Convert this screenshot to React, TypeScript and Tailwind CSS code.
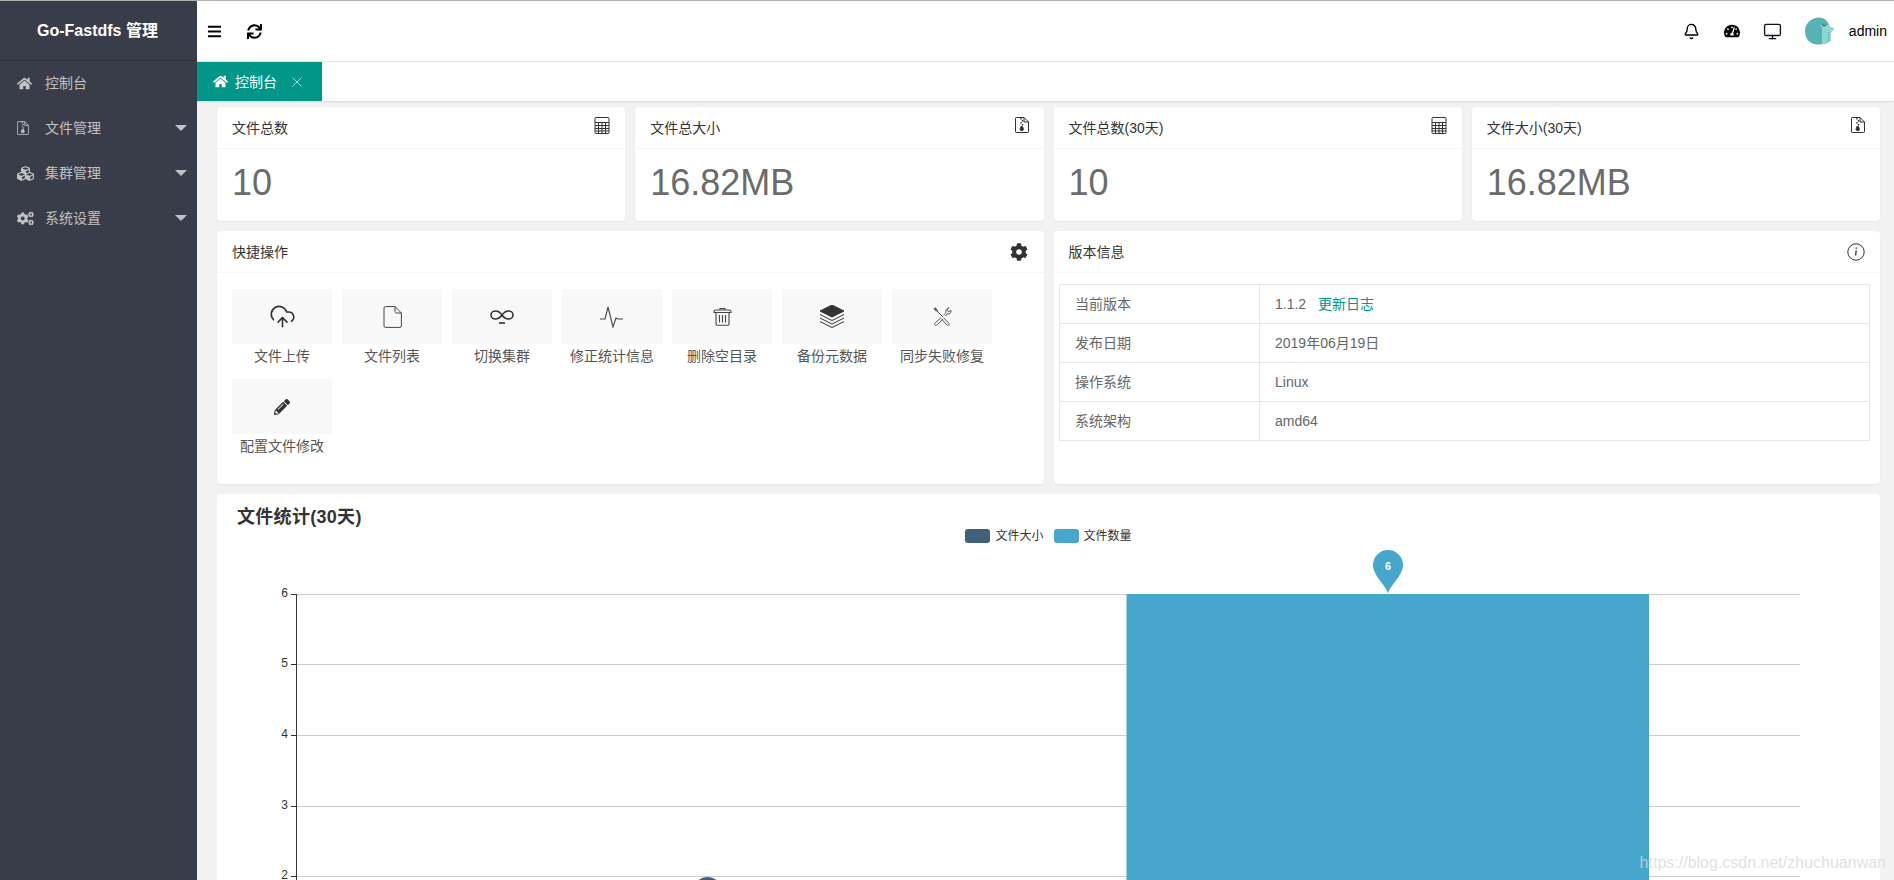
import React from "react";
import { Bell, CloudUpload, Monitor } from "lucide-react";
import {
  FaBars,
  FaCog,
  FaCogs,
  FaCubes,
  FaHome,
  FaPencilAlt,
  FaSync,
  FaTachometerAlt,
} from "react-icons/fa";

function CalcIcon() {
  return (
    <svg width="16" height="17" viewBox="0 0 16 17" fill="none" stroke="#333" strokeWidth="1">
      <rect x="1" y="0.5" width="14" height="16" rx="1" />
      <path d="M1 5.5H15M1 8.5H15M1 11.5H15M1 14H15M4.5 5.5V16.5M8 5.5V16.5M11.5 5.5V16.5" />
    </svg>
  );
}

function ZipIcon({ w = 14, h = 16 }: { w?: number; h?: number }) {
  return (
    <svg width={w} height={h} viewBox="0 0 14 16" fill="none" stroke="currentColor" strokeWidth="1">
      <path d="M0.5 1.2C0.5 0.8 0.8 0.5 1.2 0.5H9L13.5 5V14.8C13.5 15.2 13.2 15.5 12.8 15.5H1.2C0.8 15.5 0.5 15.2 0.5 14.8Z" />
      <path d="M9 0.5V5H13.5" />
      <path d="M6 1V2.5M7.5 3V4.5M6 5V6.5M7.5 7V8.5" strokeWidth="1.4" />
      <path d="M5 12.5L6 9.5H7.5L8.5 12.5C8.5 14 5 14 5 12.5Z" fill="currentColor" />
    </svg>
  );
}

function FileIcon() {
  return (
    <svg width="19" height="22" viewBox="0 0 19 22" fill="none" stroke="#444" strokeWidth="1">
      <path d="M1 2C1 1.2 1.5 0.6 2.3 0.6H12L18.4 7V20C18.4 20.8 17.8 21.4 17 21.4H2.3C1.5 21.4 1 20.8 1 20Z" />
      <path d="M12 0.6V5.5C12 6.4 12.6 7 13.5 7H18.4" />
    </svg>
  );
}

function InfinityIcon() {
  return (
    <svg width="24" height="14" viewBox="0 0 24 14" fill="none" stroke="#333" strokeWidth="1.6">
      <path d="M12 5C10 2 8 1 5.5 1C3 1 1 2.6 1 5C1 7.4 3 9 5.5 9C8 9 10 7.6 12 5C14 2.4 16 1 18.5 1C21 1 23 2.6 23 5C23 7.4 21 9 18.5 9C16 9 14 8 12 5Z" />
      <path d="M9 13H15" />
    </svg>
  );
}

function PulseIcon() {
  return (
    <svg width="24" height="22" viewBox="0 0 24 22" fill="none" stroke="#444" strokeWidth="1.1">
      <path d="M0 13H5L8 1L13 21L16 12L18 13H23" />
    </svg>
  );
}

function TrashIcon() {
  return (
    <svg width="19" height="19" viewBox="0 0 19 19" fill="none" stroke="#444" strokeWidth="1.1">
      <path d="M1 4.5C1 3 2 3 3 3H16C17 3 18 3 18 4.5V5.5H1Z" />
      <path d="M7 3V1.5H12V3" />
      <path d="M3 5.5V17C3 17.8 3.4 18.2 4 18.2H15C15.6 18.2 16 17.8 16 17V5.5" />
      <path d="M6.5 8V15.5M9.5 8V15.5M12.5 8V15.5" />
    </svg>
  );
}

function LayersIcon() {
  return (
    <svg width="26" height="23" viewBox="0 0 26 23" fill="none" stroke="#333" strokeWidth="1">
      <path d="M13 0L25 6L13 12L1 6Z" fill="#333" />
      <path d="M1 9.5L13 15.5L25 9.5M1 13L13 19L25 13M1 16.5L13 22.5L25 16.5" />
    </svg>
  );
}

function ToolsIcon() {
  return (
    <svg width="19" height="19" viewBox="0 0 19 19" fill="none" stroke="#555" strokeWidth="1">
      <path d="M1 1.8L2 0.8L4.5 3L3.4 4.2Z" fill="#555" />
      <path d="M3.5 3.5L10 10" />
      <path d="M10.5 10.8L15.8 16.2C16.6 17 16.2 18 15.4 18.2C14.8 18.4 14.3 18.2 13.8 17.8L8.6 12.2" />
      <path d="M8 10.8L2.2 15.8C1.2 16.8 1.4 17.8 2 18.2C2.8 18.7 3.6 18.4 4.3 17.7L10 12" />
      <path d="M10.8 7.8L13 5.4C12.4 3.4 13.4 1.4 15.8 0.8L14.2 3.2L15.6 4.8L18 3.4C18.4 5.8 16.4 7.6 14.2 6.9L12.2 9.2" />
    </svg>
  );
}

function InfoIcon() {
  return (
    <svg width="18" height="18" viewBox="0 0 18 18" fill="none" stroke="#333" strokeWidth="1">
      <circle cx="9" cy="9" r="8.2" />
      <path d="M9.2 7.5L8.6 12.5" strokeWidth="1.3" />
      <path d="M9.3 4.6V5.8" strokeWidth="1.4" />
    </svg>
  );
}

function Avatar() {
  return (
    <svg width="31" height="28" viewBox="0 0 31 28">
      <path d="M1 14C1 6 8 0.5 15 0.5C20 0.5 24 3.5 25.5 9.5L30 11.5L27 15.5V23C24 26.5 19 27.5 14 27.5C6 27.5 1 22 1 14Z" fill="#57b3b3" />
      <path d="M16 8C20 6.5 24 7 25.5 9.5L30 11.5L27 15.5V23C24 26 20.5 27 18 27V10Z" fill="#8cd6d4" />
      <path d="M18 7L20 9L22.5 7.5" fill="none" stroke="#2f6f70" strokeWidth="1.1" />
      <path d="M24.5 15V25" stroke="#4a8a8a" strokeWidth="1" strokeDasharray="1 1.5" />
    </svg>
  );
}

function Caret() {
  return <span className="ml-auto h-0 w-0 border-x-[6px] border-t-[6px] border-x-transparent border-t-[#c2c2c2]"></span>;
}

const menus = [
  { label: "控制台", icon: <FaHome size={15} />, more: false },
  { label: "文件管理", icon: <ZipIcon w={12} h={14} />, more: true },
  { label: "集群管理", icon: <FaCubes size={17} />, more: true },
  { label: "系统设置", icon: <FaCogs size={17} />, more: true },
];

const stats = [
  { title: "文件总数", value: "10", icon: <CalcIcon /> },
  { title: "文件总大小", value: "16.82MB", icon: <ZipIcon /> },
  { title: "文件总数(30天)", value: "10", icon: <CalcIcon /> },
  { title: "文件大小(30天)", value: "16.82MB", icon: <ZipIcon /> },
];

const quick = [
  { label: "文件上传", icon: <CloudUpload size={27} strokeWidth={1.4} color="#333" /> },
  { label: "文件列表", icon: <FileIcon /> },
  { label: "切换集群", icon: <InfinityIcon /> },
  { label: "修正统计信息", icon: <PulseIcon /> },
  { label: "删除空目录", icon: <TrashIcon /> },
  { label: "备份元数据", icon: <LayersIcon /> },
  { label: "同步失败修复", icon: <ToolsIcon /> },
  { label: "配置文件修改", icon: <FaPencilAlt size={16} color="#333" /> },
];

const ticks = [
  { label: "6", y: 51.5 },
  { label: "5", y: 121.5 },
  { label: "4", y: 192.5 },
  { label: "3", y: 263.5 },
  { label: "2", y: 333.5 },
];

const PIN = "C-1 -8 -15 -18 -15 -29A15 15 0 1 1 15 -29C15 -18 1 -8 0 0Z";

function Chart() {
  return (
    <svg width="1663" height="340" viewBox="0 0 1663 340" className="block">
      {ticks.map((t) => (
        <g key={t.label}>
          <path d={`M79 ${t.y}H1583`} stroke="#ccc" strokeWidth="1" />
          <path d={`M74 ${t.y}H79`} stroke="#333" strokeWidth="1" />
          <text x="71" y={t.y + 2} textAnchor="end" fontSize="12" fill="#333">
            {t.label}
          </text>
        </g>
      ))}
      <path d="M79.5 51V340" stroke="#333" strokeWidth="1" />
      <rect x="909.5" y="51" width="522.5" height="289" fill="#46a6cb" />
      <g transform="translate(1171 51)">
        <path d={`M0 0${PIN}`} fill="#46a6cb" />
        <text x="0" y="-24" textAnchor="middle" fontSize="11" fontWeight="700" fill="#fff">
          6
        </text>
      </g>
      <g transform="translate(490.5 378)">
        <path d={`M0 0${PIN}`} fill="#41607a" />
      </g>
    </svg>
  );
}

export default function App() {
  return (
    <div className="relative flex h-[880px] w-[1894px] flex-col overflow-hidden bg-[#f2f2f2] font-['Liberation_Sans','Noto_Sans_CJK_SC',sans-serif] text-sm text-[#666]">
      <div className="h-px bg-[#b0b0b0]"></div>
      <div className="flex min-h-0 flex-1">
        <aside className="w-[197px] shrink-0 bg-[#393d49]">
          <div className="flex h-[60px] items-center justify-center border-b border-[#2f323c] pr-[2px] text-base font-bold text-white">
            Go-Fastdfs 管理
          </div>
          {menus.map((m) => (
            <div key={m.label} className="flex h-[45px] items-center pb-px pl-[17px] pr-[10px] text-[#c2c2c2]">
              <span className="flex w-[28px] items-center">{m.icon}</span>
              <span>{m.label}</span>
              {m.more && <Caret />}
            </div>
          ))}
        </aside>

        <main className="min-w-0 flex-1">
          <header className="flex h-[61px] items-center border-b border-[#e6e6e6] bg-white text-black">
            <FaBars size={15} className="ml-[10px]" />
            <FaSync size={15} className="ml-[25px]" />
            <div className="ml-auto flex items-center">
              <Bell size={17} strokeWidth={1.9} />
              <FaTachometerAlt size={16} className="ml-[24px]" />
              <Monitor size={19} strokeWidth={1.7} color="#112" className="ml-[23px]" />
              <span className="ml-[22px]">
                <Avatar />
              </span>
              <span className="ml-[14px] mr-[7px]">admin</span>
            </div>
          </header>

          <div className="flex h-[39px] bg-white shadow-[0_1px_2px_rgba(0,0,0,0.1)]">
            <div className="flex w-[125px] items-center bg-[#009688] pl-4 text-white">
              <FaHome size={15} />
              <span className="ml-[7px]">控制台</span>
              <svg width="10" height="10" viewBox="0 0 10 10" className="ml-[15px]" stroke="#a6dcd6" strokeWidth="1">
                <path d="M0.5 0.5L9.5 9.5M9.5 0.5L0.5 9.5" />
              </svg>
            </div>
          </div>

          <div className="pl-5 pr-[14px] pt-[6px]">
            <div className="grid grid-cols-4 gap-[10px]">
              {stats.map((s, i) => (
                <div key={i} className="h-[114px] rounded-sm bg-white shadow-[0_1px_2px_rgba(0,0,0,0.05)]">
                  <div className="flex h-[42px] justify-between border-b border-[#f6f6f6] px-[15px] leading-[42px] text-[#333]">
                    <span>{s.title}</span>
                    <span className="mt-[10px]">{s.icon}</span>
                  </div>
                  <div className="px-[15px] pt-[13px] text-4xl leading-[42px] text-[#6b6b6b]">{s.value}</div>
                </div>
              ))}
            </div>

            <div className="mt-[10px] grid grid-cols-2 gap-[10px]">
              <div className="h-[253px] rounded-sm bg-white shadow-[0_1px_2px_rgba(0,0,0,0.05)]">
                <div className="flex h-[42px] items-center justify-between border-b border-[#f6f6f6] px-[15px] text-[#333]">
                  <span>快捷操作</span>
                  <FaCog size={18} className="mr-px" />
                </div>
                <div className="flex flex-wrap gap-x-[10px] px-[15px] pt-[16px]">
                  {quick.map((q) => (
                    <div key={q.label} className="h-[90px] w-[100px] text-center">
                      <div className="flex h-[55px] items-center justify-center bg-[#f8f8f8]">{q.icon}</div>
                      <div className="leading-[25px] text-[#555]">{q.label}</div>
                    </div>
                  ))}
                </div>
              </div>

              <div className="h-[253px] rounded-sm bg-white shadow-[0_1px_2px_rgba(0,0,0,0.05)]">
                <div className="flex h-[42px] items-center justify-between border-b border-[#f6f6f6] px-[15px] text-[#333]">
                  <span>版本信息</span>
                  <InfoIcon />
                </div>
                <div className="ml-[5.5px] mr-[10px] mt-[11px]">
                  <table className="w-full border-collapse text-[#666]">
                    <tbody>
                      <tr className="h-[39px]">
                        <td className="w-[200px] border border-[#e6e6e6] px-[15px]">当前版本</td>
                        <td className="border border-[#e6e6e6] px-[15px]">
                          1.1.2 <span className="ml-[8px] text-[#009688]">更新日志</span>
                        </td>
                      </tr>
                      <tr className="h-[39px]">
                        <td className="border border-[#e6e6e6] px-[15px]">发布日期</td>
                        <td className="border border-[#e6e6e6] px-[15px]">2019年06月19日</td>
                      </tr>
                      <tr className="h-[39px]">
                        <td className="border border-[#e6e6e6] px-[15px]">操作系统</td>
                        <td className="border border-[#e6e6e6] px-[15px]">Linux</td>
                      </tr>
                      <tr className="h-[39px]">
                        <td className="border border-[#e6e6e6] px-[15px]">系统架构</td>
                        <td className="border border-[#e6e6e6] px-[15px]">amd64</td>
                      </tr>
                    </tbody>
                  </table>
                </div>
              </div>
            </div>

            <div className="mt-[10px] h-[500px] rounded-sm bg-white pt-[12px]">
              <div className="pl-5 text-lg font-bold leading-[23px] tracking-[0.3px] text-[#333]">文件统计(30天)</div>
              <div className="flex h-[14px] items-center justify-center text-xs text-[#333]">
                <span className="h-[14px] w-[25px] rounded-[3px] bg-[#41607a]"></span>
                <span className="ml-[5px]">文件大小</span>
                <span className="ml-[10px] h-[14px] w-[25px] rounded-[3px] bg-[#46a6cb]"></span>
                <span className="ml-[5px]">文件数量</span>
              </div>
              <Chart />
            </div>
          </div>
        </main>
      </div>
      <div className="absolute bottom-[7px] right-2 text-base leading-5 text-[#d8d8d8]/80">
        https://blog.csdn.net/zhuchuanwan
      </div>
    </div>
  );
}
